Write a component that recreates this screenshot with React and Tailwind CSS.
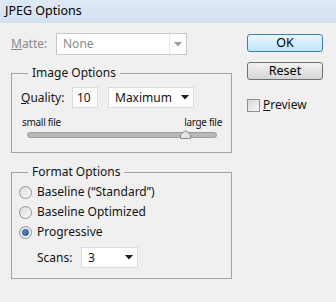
const FONT = "font-['Noto_Sans','Liberation_Sans',sans-serif]";

function Arrow({ muted }) {
  return (
    <svg width="8" height="5" viewBox="0 0 8 5" className="flex-shrink-0">
      <path d="M0 0 H8 L4 4.5 Z" fill={muted ? '#9a9a9a' : '#1a1a1a'} />
    </svg>
  );
}

function Select({ value, width, muted, divider }) {
  return (
    <div
      className={`flex items-center h-[21px] bg-white border ${
        muted ? 'border-[#c9c9c9] text-[#8a8a8a]' : 'border-[#dcdcdc] text-[#111]'
      } ${width}`}
    >
      <span className="flex-1 pl-[6px] leading-none">{value}</span>
      <span
        className={`flex items-center justify-center w-[17px] h-full ${
          divider ? 'border-l border-[#e6e6e6]' : ''
        }`}
      >
        <Arrow muted={muted} />
      </span>
    </div>
  );
}

function Radio({ checked, label }) {
  return (
    <div className="flex items-center h-[20px]">
      <span className="w-[13px] h-[13px] rounded-full border border-[#929292] bg-gradient-to-br from-[#dcdcdc] to-[#f7f7f7] flex items-center justify-center">
        {checked && (
          <span className="w-[7px] h-[7px] rounded-full bg-gradient-to-br from-[#5aa0df] to-[#1c5b98] border border-[#1d4f80]" />
        )}
      </span>
      <span className="ml-[5px]">{label}</span>
    </div>
  );
}

function Group({ title, className, children }) {
  return (
    <div className={`border border-[#a3a3a3] ${className}`}>
      <div className="flex -mt-[9px] ml-[16px]">
        <span className="bg-[#f0f0f0] px-[4px] leading-[16px]">{title}</span>
      </div>
      {children}
    </div>
  );
}

export default function App() {
  return (
    <div className={`w-[336px] h-[302px] bg-[#f0f0f0] text-[12px] text-[#141414] ${FONT} overflow-hidden`}>
      {/* ── Title bar ── */}
      <div className="h-[23px] bg-gradient-to-b from-[#dfe9f5] to-[#d3e0ee] flex items-center pl-[5px] text-[12.5px] text-black">
        JPEG Options
      </div>

      <div className="flex">
        {/* ── Left column ── */}
        <div className="w-[232px] pl-[11px]">
          <div className="flex items-center mt-[10px] h-[22px]">
            <span className="w-[45px] text-[#8a8a8a]">
              <span className="underline">M</span>atte:
            </span>
            <Select value="None" width="w-[131px] h-[22px]" muted divider />
          </div>

          <Group title="Image Options" className="mt-[18px] h-[80px]">
            <div className="flex items-center mt-[6px] pl-[9px]">
              <span className="w-[51px]">
                <span className="underline">Q</span>uality:
              </span>
              <div className="w-[26px] h-[21px] bg-white border border-[#dcdcdc] flex items-center pl-[4px]">10</div>
              <div className="ml-[10px]">
                <Select value="Maximum" width="w-[86px]" />
              </div>
            </div>
            <div className="flex justify-between pl-[10px] pr-[9px] mt-[8px] text-[10px] leading-[12px] tracking-[-0.3px]">
              <span>small file</span>
              <span>large file</span>
            </div>
            <div className="relative ml-[15px] mt-[4px] w-[190px] h-[6px] rounded-full bg-[#b9b9b9] border border-[#9d9d9d]">
              <svg width="11" height="9" viewBox="0 0 11 9" className="absolute left-[152px] -top-[3px]">
                <path d="M0.5 8.5 V4.5 L5.5 0.5 L10.5 4.5 V8.5 Z" fill="#e4e4e4" stroke="#8a8a8a" />
              </svg>
            </div>
          </Group>

          <Group title="Format Options" className="mt-[19px] h-[107px]">
            <div className="pl-[7px] mt-[2px]">
              <Radio label={'Baseline (\u201cStandard\u201d)'} />
              <Radio label="Baseline Optimized" />
              <Radio checked label="Progressive" />
            </div>
            <div className="flex items-center pl-[25px] mt-[5px]">
              <span className="w-[44px]">Scans:</span>
              <Select value="3" width="w-[57px]" />
            </div>
          </Group>
        </div>

        {/* ── Right column ── */}
        <div className="ml-[15px] w-[76px] pt-[11px]">
          <button className="w-full h-[18px] rounded-[3px] border border-[#3c7fb1] bg-gradient-to-b from-[#eaf6fd] to-[#bee6fd] text-[12.5px] leading-none text-black">
            OK
          </button>
          <button className="w-full h-[18px] mt-[10px] rounded-[3px] border border-[#707070] bg-gradient-to-b from-[#f2f2f2] to-[#d6d6d6] text-[12.5px] leading-none text-black">
            Reset
          </button>
          <div className="flex items-center mt-[16px]">
            <span className="w-[13px] h-[13px] border border-[#8f8f8f] bg-gradient-to-br from-[#d8d8d8] to-[#f6f6f6]" />
            <span className="ml-[3px]">
              <span className="underline">P</span>review
            </span>
          </div>
        </div>
      </div>
    </div>
  );
}
